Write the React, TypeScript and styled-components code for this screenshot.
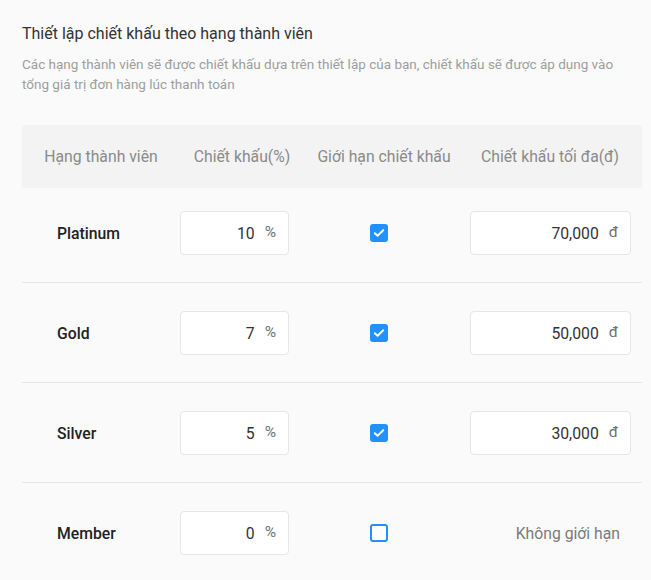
import styled, { createGlobalStyle } from "styled-components";

const GlobalStyle = createGlobalStyle`
  html, body {
    margin: 0;
    padding: 0;
    background: #fafafa;
    font-family: Roboto, "Noto Sans", "Liberation Sans", sans-serif;
  }
`;

interface ITier {
  name: string;
  discount: number;
  limited: boolean;
  max?: string;
}

const TIERS: ITier[] = [
  { name: "Platinum", discount: 10, limited: true, max: "70,000" },
  { name: "Gold", discount: 7, limited: true, max: "50,000" },
  { name: "Silver", discount: 5, limited: true, max: "30,000" },
  { name: "Member", discount: 0, limited: false },
];

const Page = styled.div`
  padding: 24px 9px 0 22px;
  height: 580px;
  box-sizing: border-box;
  overflow: hidden;
`;

const Title = styled.div`
  font-size: 16px;
  line-height: 20px;
  font-weight: 400;
  color: #333;
`;

const Desc = styled.div`
  margin-top: 10px;
  font-size: 13.5px;
  line-height: 20px;
  color: #9e9e9e;
  white-space: nowrap;
`;

const Table = styled.div`
  margin-top: 31px;
`;

const Grid = styled.div`
  display: grid;
  grid-template-columns: 158px 140px 150px 172px;
  align-items: center;
`;

const Head = styled(Grid)`
  height: 63px;
  background: #f3f3f3;
  border-radius: 2px;
`;

const HeadCell = styled.div<{ $pr?: number }>`
  display: flex;
  justify-content: center;
  font-size: 15.75px;
  color: #8a8a8a;
  padding-right: ${(p) => p.$pr ?? 0}px;
  white-space: nowrap;
`;

const Row = styled(Grid)`
  padding: 28px 0 27px;
  border-bottom: 1px solid #e6e6e6;
  &:first-child {
    padding-top: 23px;
  }
`;

const Label = styled.div`
  padding-left: 35px;
  font-size: 15.75px;
  font-weight: 500;
  color: #222;
`;

const Field = styled.div<{ $w: number }>`
  width: ${(p) => p.$w}px;
  height: 44px;
  box-sizing: border-box;
  background: #fff;
  border: 1px solid #e3e6eb;
  border-radius: 4px;
  display: flex;
  align-items: center;
  justify-content: flex-end;
  gap: 10px;
  padding-right: 12px;
`;

const Value = styled.span`
  font-size: 15.75px;
  color: #333;
`;

const Suffix = styled.span`
  font-size: 15.5px;
  color: #707070;
  margin-bottom: 3px;
`;

const CheckCell = styled.div`
  padding-left: 50px;
  display: flex;
`;

const Box = styled.span<{ $on: boolean }>`
  width: 18px;
  height: 18px;
  box-sizing: border-box;
  border-radius: 3px;
  border: 2px solid #2291ff;
  background: ${(p) => (p.$on ? "#2291ff" : "#fff")};
  display: flex;
  align-items: center;
  justify-content: center;
`;

const NoLimit = styled.div`
  text-align: right;
  padding-right: 22px;
  font-size: 15.75px;
  color: #7a7a7a;
`;

function Check({ on }: { on: boolean }) {
  return (
    <Box $on={on}>
      {on && (
        <svg width="12" height="10" viewBox="0 0 12 10">
          <path d="M1.8 5.2 L4.6 7.8 L10.2 2.2" fill="none" stroke="#fff" strokeWidth="2" strokeLinecap="round" strokeLinejoin="round" />
        </svg>
      )}
    </Box>
  );
}

export default function App() {
  return (
    <Page>
      <GlobalStyle />
      <Title>Thiết lập chiết khấu theo hạng thành viên</Title>
      <Desc>
        Các hạng thành viên sẽ được chiết khấu dựa trên thiết lập của bạn, chiết khấu sẽ được áp dụng vào
        <br />
        tổng giá trị đơn hàng lúc thanh toán
      </Desc>
      <Table>
        <Head>
          <HeadCell>Hạng thành viên</HeadCell>
          <HeadCell $pr={16}>Chiết khấu(%)</HeadCell>
          <HeadCell $pr={22}>Giới hạn chiết khấu</HeadCell>
          <HeadCell $pr={12}>Chiết khấu tối đa(đ)</HeadCell>
        </Head>
        <div>
          {TIERS.map((t) => (
            <Row key={t.name}>
              <Label>{t.name}</Label>
              <Field $w={109}>
                <Value>{t.discount}</Value>
                <Suffix>%</Suffix>
              </Field>
              <CheckCell>
                <Check on={t.limited} />
              </CheckCell>
              {t.max ? (
                <Field $w={161}>
                  <Value>{t.max}</Value>
                  <Suffix>đ</Suffix>
                </Field>
              ) : (
                <NoLimit>Không giới hạn</NoLimit>
              )}
            </Row>
          ))}
        </div>
      </Table>
    </Page>
  );
}
